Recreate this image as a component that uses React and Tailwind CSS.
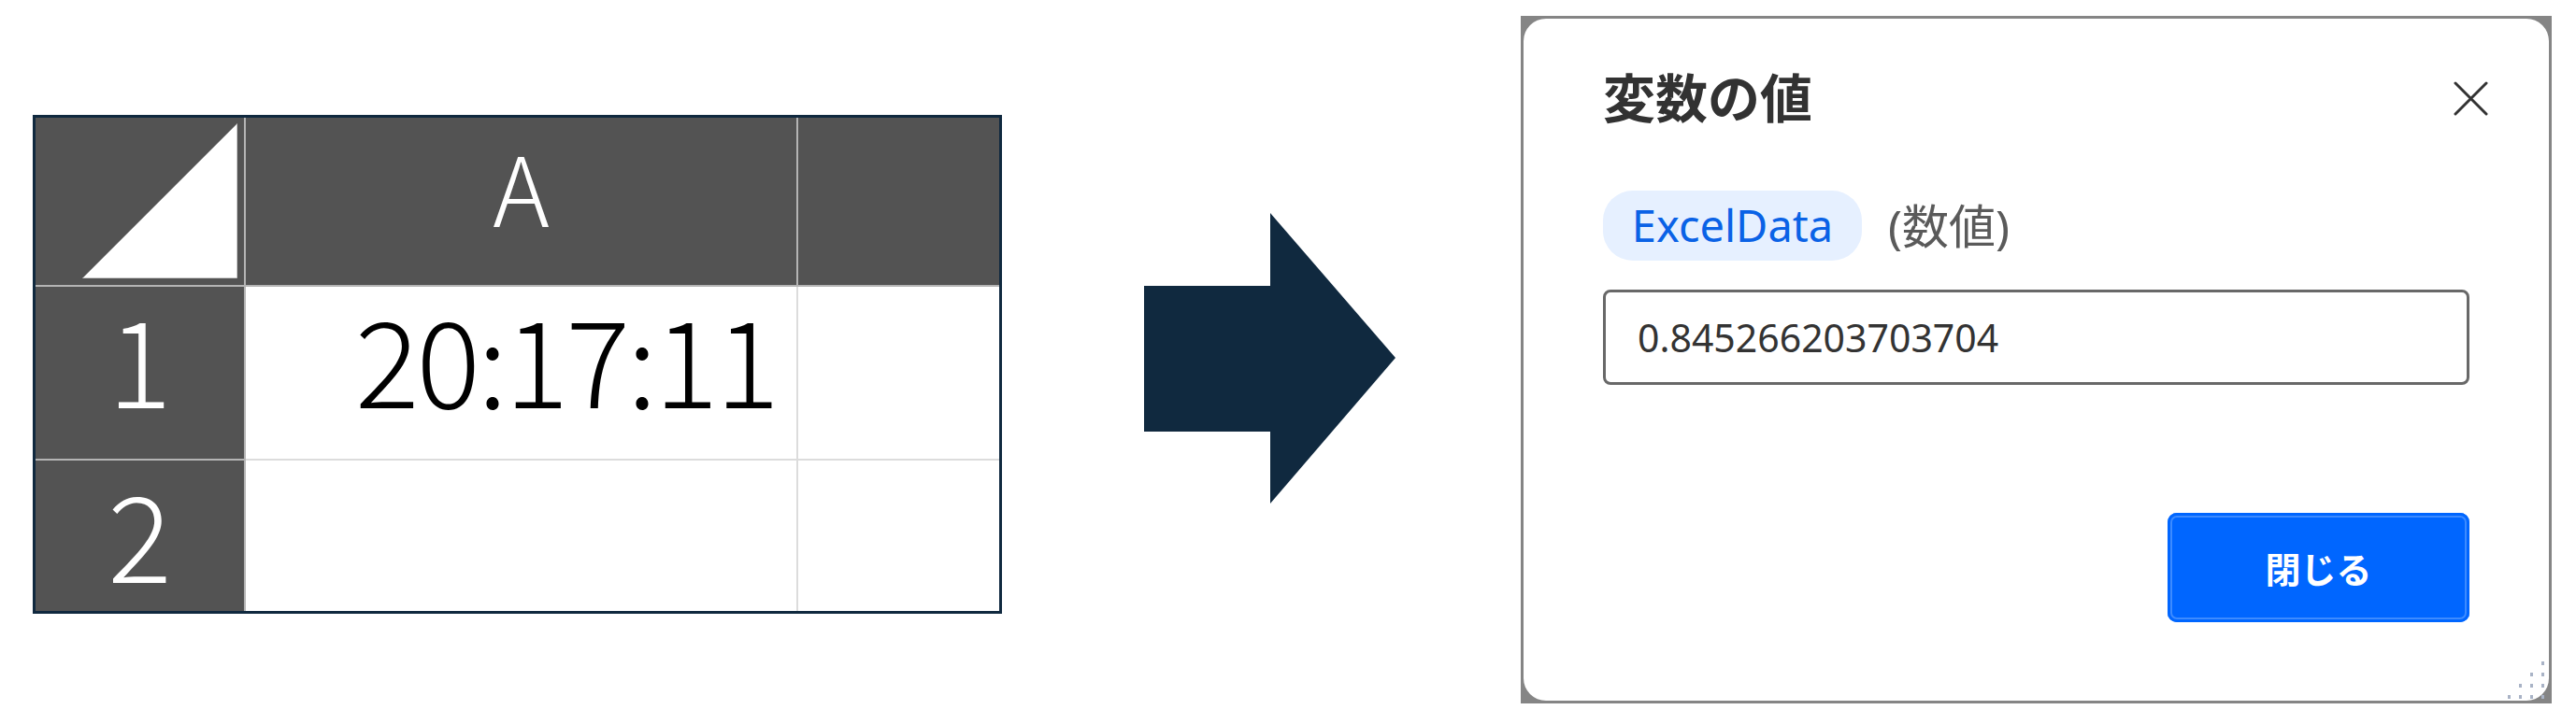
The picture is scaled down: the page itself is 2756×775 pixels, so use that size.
import React from 'react';

// セルのフォント (Yu Gothic 風の細い数字)
const sheetFont = { fontFamily: '"Noto Sans CJK JP", "Noto Sans", sans-serif' };
const uiFont = { fontFamily: '"Noto Sans", "Noto Sans CJK JP", sans-serif' };

function Sheet() {
  return (
    <div className="ml-[35px] mt-[123px] border-[3px] border-[#10293f] bg-white" style={sheetFont}>
      <div className="grid grid-cols-[225px_591px_215px] grid-rows-[181px_186px_161px]">
        {/* 左上の全選択セル */}
        <div className="flex items-end justify-end bg-[#535353] border-r-2 border-b-2 border-[#b4b4b4] pr-[7px] pb-[7px]">
          <svg width="166" height="166" viewBox="0 0 166 166">
            <polygon points="166,0 166,166 0,166" fill="#ffffff" stroke="#9a9a9a" strokeWidth="1" />
          </svg>
        </div>
        <div className="flex items-start justify-center bg-[#535353] border-r-2 border-b-2 border-[#b4b4b4] pt-[21px] text-white text-[103px] font-light leading-none">
          A
        </div>
        <div className="bg-[#535353] border-b-2 border-[#b4b4b4]" />

        <div className="flex items-start justify-center bg-[#535353] border-r-2 border-b-2 border-[#b4b4b4] pt-[11px] text-white text-[128px] font-light leading-none">
          1
        </div>
        <div className="flex items-start justify-end border-r-2 border-b-2 border-[#dcdcdc] pt-[11px] pr-[21px] text-black text-[128px] font-light leading-none tracking-[-3px]">
          20:17:11
        </div>
        <div className="border-b-2 border-[#dcdcdc]" />

        <div className="flex items-start justify-center bg-[#535353] border-r-2 border-[#b4b4b4] pt-[12px] text-white text-[128px] font-light leading-none">
          2
        </div>
        <div className="border-r-2 border-[#dcdcdc]" />
        <div />
      </div>
    </div>
  );
}

function Arrow() {
  return (
    <div className="ml-[152px] mt-[228px]">
      <svg width="270" height="311" viewBox="0 0 270 311">
        <polygon points="0,78 135,78 135,0 269,155 135,311 135,234 0,234" fill="#10293f" />
      </svg>
    </div>
  );
}

function ResizeGrip() {
  const dots = [];
  const cols = [0, 12, 24, 36];
  cols.forEach((x, ci) => {
    for (let ri = 0; ri <= ci; ri++) {
      dots.push(<rect key={`${ci}-${ri}`} x={x} y={36 - ri * 12} width="3" height="4" fill="#a9b3c6" />);
    }
  });
  return (
    <svg className="absolute right-[4px] bottom-[2px]" width="40" height="40" viewBox="0 0 40 40">
      {dots}
    </svg>
  );
}

function Dialog() {
  return (
    <div className="ml-[133px] mt-[17px] w-[1103px] h-[736px] bg-[#858585] p-[3px]" style={uiFont}>
      <div className="relative h-full bg-white rounded-[24px] px-[85px] pt-[54px]">
        <div className="flex items-start justify-between">
          <h2 className="text-[56px] font-bold leading-none text-[#323232]" style={{ fontFamily: '"Noto Sans CJK JP", sans-serif' }}>
            変数の値
          </h2>
          <button className="mt-[13px] -mr-[20px]">
            <svg width="37" height="37" viewBox="0 0 37 37">
              <path d="M2 2 L35 35 M35 2 L2 35" stroke="#333333" strokeWidth="3" strokeLinecap="round" />
            </svg>
          </button>
        </div>

        <div className="mt-[74px] flex items-center gap-[28px]">
          <span className="h-[75px] w-[277px] flex items-center justify-center rounded-[32px] bg-[#e6f0ff] text-[47px] leading-none text-[#0a62e6]">
            ExcelData
          </span>
          <span className="text-[50px] leading-none text-[#5a5a5a]">(数値)</span>
        </div>

        <div className="mt-[31px] h-[102px] flex items-center rounded-[8px] border-[3px] border-[#686868] pl-[34px] text-[41px] leading-none text-[#333333]">
          0.845266203703704
        </div>

        <div className="mt-[137px] flex justify-end">
          <button className="h-[117px] w-[323px] rounded-[10px] bg-[#0066ff] shadow-[inset_0_0_0_3px_#0066ff,inset_0_0_0_5px_#3d8bff] text-white text-[38px] font-bold leading-none" style={{ fontFamily: '"Noto Sans CJK JP", sans-serif' }}>
            閉じる
          </button>
        </div>

        <ResizeGrip />
      </div>
    </div>
  );
}

export default function App() {
  return (
    <div className="flex items-start w-[2756px] h-[775px] bg-white overflow-hidden">
      <Sheet />
      <Arrow />
      <Dialog />
    </div>
  );
}
